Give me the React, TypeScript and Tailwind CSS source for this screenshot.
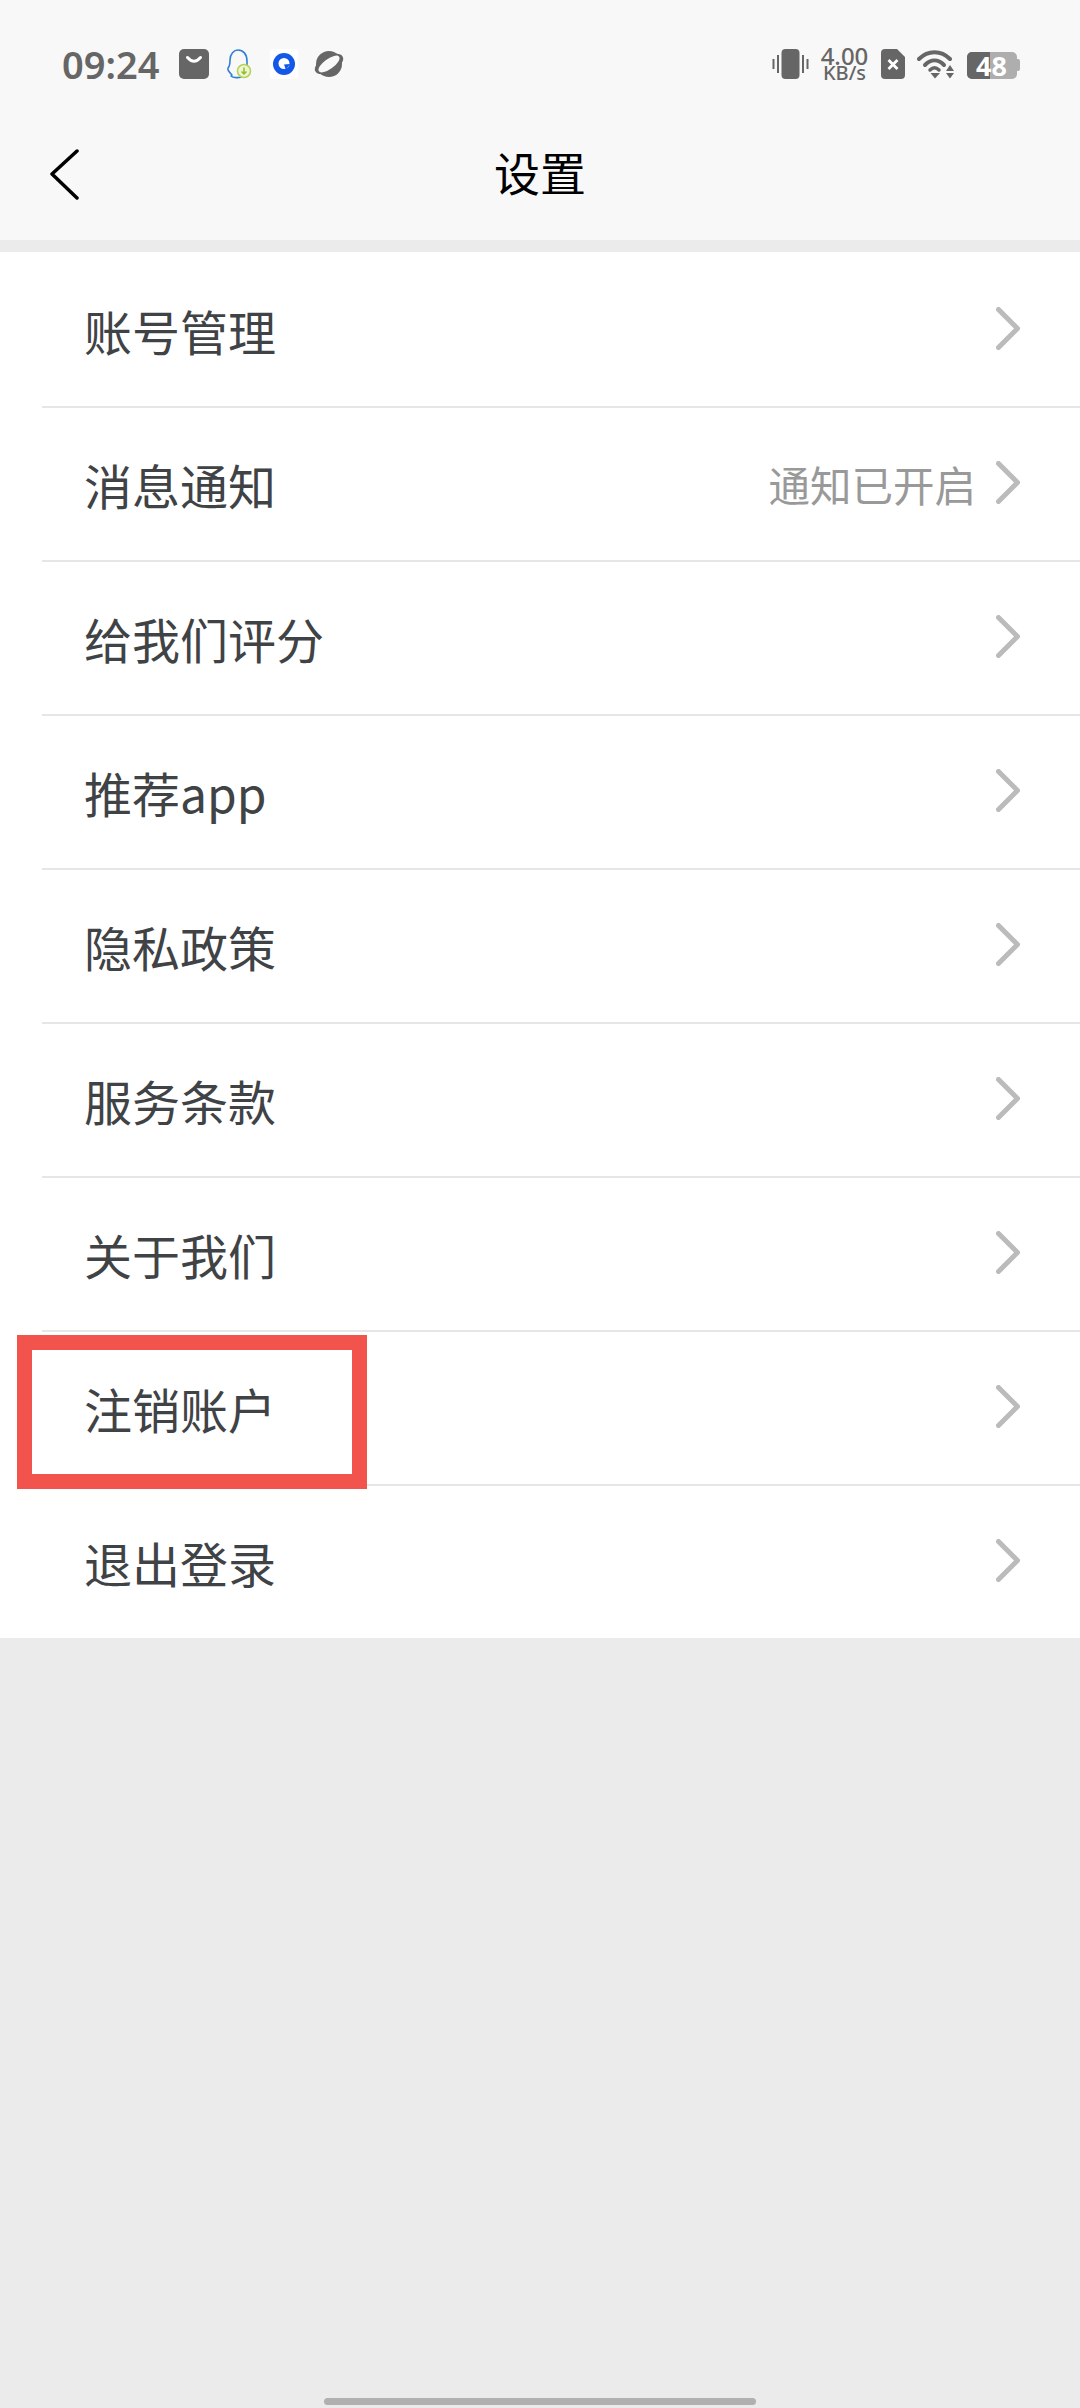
const rows = [
  { label: '账号管理' },
  { label: '消息通知', value: '通知已开启' },
  { label: '给我们评分' },
  { label: '推荐app' },
  { label: '隐私政策' },
  { label: '服务条款' },
  { label: '关于我们' },
  { label: '注销账户' },
  { label: '退出登录' },
];

function Chevron() {
  return (
    <svg width="24" height="43" viewBox="0 0 24 43" fill="none" className="mb-[3px] shrink-0">
      <path d="M2.500 2.500 L21.500 21.500 L2.500 40.500" stroke="#bbbbbb" strokeWidth="5" strokeLinecap="round" strokeLinejoin="round" />
    </svg>
  );
}

function StatusLeft() {
  return (
    <div className="flex items-center">
      <span className="w-[98px] text-[38px] leading-none font-semibold whitespace-nowrap text-[#666666] font-['Noto_Sans',sans-serif]">09:24</span>
      {/* bag */}
      <svg width="30" height="30" viewBox="0 0 30 30" className="ml-[19px]">
        <rect width="30" height="30" rx="5" fill="#666666" />
        <path d="M8.500 8.500 Q15 16 21.500 8.500" stroke="#ffffff" strokeWidth="3" fill="none" strokeLinecap="round" />
      </svg>
      {/* qq download */}
      <svg width="28" height="30" viewBox="0 0 28 30" className="ml-[17px]">
        <path d="M5 27 C7 29 13 29 15 28 M6 26 C4 24 1 21 2 19 C4 17 4 15 4 11 C4 5 8 1 12 1 C17 1 21 5 21 12 L21 17" stroke="#2f7fd8" strokeWidth="1.600" fill="none" strokeLinecap="round" />
        <circle cx="18" cy="22" r="6.500" fill="#eef5d0" stroke="#b5d35a" strokeWidth="1.600" />
        <path d="M18 18.500 V25 M15.500 22.500 L18 25 L20.500 22.500" stroke="#8fbf30" strokeWidth="1.500" fill="none" />
      </svg>
      {/* blue circle */}
      <div className="ml-[16px] flex h-[30px] w-[28px] items-center justify-center rounded-[3px] bg-white">
        <svg width="22" height="22" viewBox="0 0 22 22">
          <circle cx="11" cy="11" r="11" fill="#1358e8" />
          <circle cx="11" cy="10.500" r="5.500" fill="#ffffff" />
          <path d="M11 11.500 L17 11 L13 17z" fill="#1358e8" />
        </svg>
      </div>
      {/* planet */}
      <svg width="30" height="28" viewBox="0 0 30 28" className="ml-[16px]">
        <ellipse cx="15" cy="14" rx="15.500" ry="8" transform="rotate(-28 15 14)" fill="#666666" />
        <circle cx="15" cy="14" r="13" fill="#666666" />
        <ellipse cx="15" cy="14" rx="12.500" ry="5" transform="rotate(-36 15 14)" fill="#f8f8f8" />
      </svg>
    </div>
  );
}

function StatusRight() {
  return (
    <div className="flex items-center">
      {/* vibrate */}
      <svg width="37" height="30" viewBox="0 0 37 30">
        <rect x="9.500" y="0" width="18" height="30" rx="4" fill="#666666" />
        <rect x="0.500" y="10" width="2" height="10" fill="#666666" />
        <rect x="5" y="6" width="2" height="18" fill="#666666" />
        <rect x="30" y="6" width="2" height="18" fill="#666666" />
        <rect x="34.500" y="10" width="2" height="10" fill="#666666" />
      </svg>
      <div className="ml-[11px] flex w-[49px] flex-col items-center font-['Noto_Sans',sans-serif] font-medium text-[#666666]">
        <span className="text-[24px] leading-[18px]">4.00</span>
        <span className="text-[20px] leading-[16px]">KB/s</span>
      </div>
      {/* sim */}
      <svg width="24" height="30" viewBox="0 0 24 30" className="ml-[12px]">
        <path d="M4 0 H16 L24 8 V26 a4 4 0 0 1-4 4 H4 a4 4 0 0 1-4-4 V4 a4 4 0 0 1 4-4z" fill="#666666" />
        <path d="M7.500 11 L16.500 20 M16.500 11 L7.500 20" stroke="#ffffff" strokeWidth="2.800" />
      </svg>
      {/* wifi */}
      <svg width="38" height="30" viewBox="0 0 38 30" className="ml-[12px]">
        <path d="M2 10 C11 1 24 1 33 10" stroke="#666666" strokeWidth="4" fill="none" strokeLinecap="round" />
        <path d="M8 16 C14 10 21 10 27 16" stroke="#666666" strokeWidth="4" fill="none" strokeLinecap="round" />
        <path d="M13 21 C16 18 19 18 22 21" stroke="#666666" strokeWidth="3.500" fill="none" strokeLinecap="round" />
        <path d="M13.500 24 H23 L18 29.500z" fill="#666666" />
        <path d="M33 16 L37 22 H29z M29 24 H37 L33 29.500z" fill="#666666" />
      </svg>
      {/* battery */}
      <div className="relative ml-[12px] mt-[2px] flex h-[27px] w-[53px] items-center">
        <div className="flex h-full w-[50px] overflow-hidden rounded-[5px] bg-[#aeaeae]">
          <div className="h-full w-[23px] bg-[#666666]" />
        </div>
        <div className="h-[12px] w-[3px] rounded-r-[2px] bg-[#aeaeae]" />
        <span className="absolute left-[9px] top-0 text-[27px] leading-[27px] font-bold text-white font-['Noto_Sans',sans-serif]">48</span>
      </div>
    </div>
  );
}

export default function App() {
  return (
    <div className="relative flex h-[2408px] w-[1080px] flex-col overflow-hidden bg-[#ebebeb] font-['Noto_Sans_CJK_SC','Noto_Sans',sans-serif]">
      {/* Header */}
      <header className="h-[240px] bg-[#f8f8f8]">
        <div className="flex items-center justify-between pl-[62px] pr-[60px] pt-[45px]">
          <StatusLeft />
          <StatusRight />
        </div>
        <div className="mt-[58px] grid grid-cols-[1fr_auto_1fr] items-start pl-[50px]">
          <svg width="30" height="52" viewBox="0 0 30 52" fill="none" className="mt-[8px]">
            <path d="M27 2 L2 25 L27 49" stroke="#000000" strokeWidth="3.500" strokeLinecap="round" strokeLinejoin="round" />
          </svg>
          <h1 className="-ml-[50px] text-[46px] leading-[60px] font-normal text-black">设置</h1>
          <div />
        </div>
      </header>

      {/* List */}
      <ul className="mt-[12px] bg-white pt-[2px]">
        {rows.map((row, i) => (
          <li
            key={row.label}
            className={`ml-[42px] flex items-center pl-[42px] pr-[60px] ${i < rows.length - 1 ? 'h-[154px] border-b-2 border-[#e6e6e6]' : 'h-[152px]'}`}
          >
            <span className="flex-1 text-[48px] leading-[60px] text-[#3f4346]">{row.label}</span>
            {row.value && <span className="mr-[20px] text-[41.500px] leading-[56px] text-[#999999]">{row.value}</span>}
            <Chevron />
          </li>
        ))}
      </ul>

      {/* Annotation */}
      <div className="absolute left-[17px] top-[1335px] h-[154px] w-[350px] border-[15px] border-[#f2544d]" />

      {/* Home indicator */}
      <div className="absolute bottom-[3px] left-[324px] h-[7px] w-[432px] rounded-full bg-[#b0b0b0]" />
    </div>
  );
}
